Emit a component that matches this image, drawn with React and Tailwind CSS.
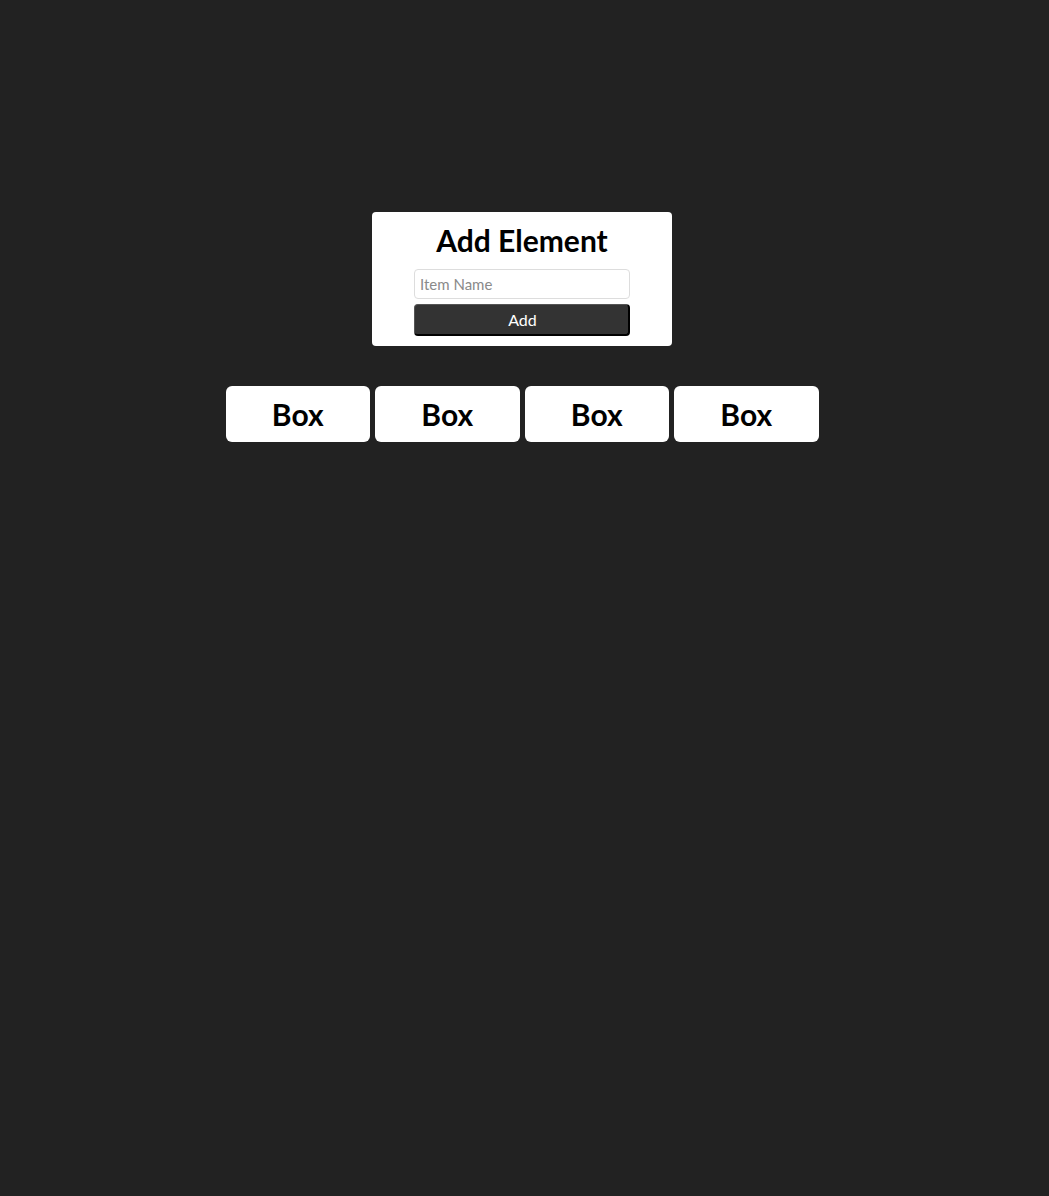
import React, { useState } from 'react';

export default function App() {
  const [name, setName] = useState('');
  const [items, setItems] = useState(['Box', 'Box', 'Box', 'Box']);

  const addItem = () => {
    if (!name.trim()) return;
    setItems([...items, name]);
    setName('');
  };

  return (
    <div className="min-h-[1196px] bg-[#222222] pr-[5px] pt-[212px] font-['Lato',sans-serif]">
      <div className="flex justify-center">
        <div className="flex w-[300px] flex-col items-center rounded-[4px] bg-white pb-[10px] pt-[10px]">
          <h1 className="text-[30px] font-bold leading-[36px] text-black">Add Element</h1>
          <input
            className="mt-[11px] h-[30px] w-[216px] rounded-[4px] border border-[#dddddd] px-[5px] text-[15px] outline-none placeholder:text-[#8a8a8a]"
            placeholder="Item Name"
            value={name}
            onChange={e => setName(e.target.value)}
          />
          <button
            className="mt-[5px] h-[32px] w-[216px] rounded-[4px] border-t border-l border-b-2 border-r-2 border-t-[#555555] border-l-[#555555] border-b-black border-r-black bg-[#333333] pl-[2px] pt-[1px] text-[16px] text-white"
            onClick={addItem}
          >
            Add
          </button>
        </div>
      </div>
      <div className="mt-[40px] flex justify-center gap-[5px]">
        {items.map((it, i) => (
          <div key={i} className="flex h-[56px] w-[144.5px] items-center justify-center rounded-[6px] bg-white text-[30px] font-bold text-black">
            {it}
          </div>
        ))}
      </div>
    </div>
  );
}
